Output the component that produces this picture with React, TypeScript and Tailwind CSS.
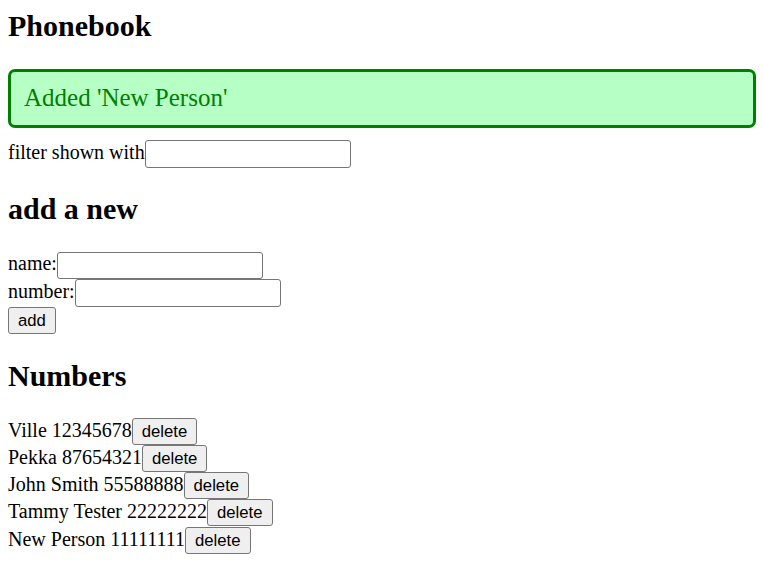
import { useState } from "react";

const persons = [
  { name: "Ville", number: "12345678" },
  { name: "Pekka", number: "87654321" },
  { name: "John Smith", number: "55588888" },
  { name: "Tammy Tester", number: "22222222" },
  { name: "New Person", number: "11111111" },
];

const inputClass =
  "w-[206px] h-[27.5px] border border-[#767676] rounded-[3px] bg-white px-[3px] text-[16.7px] leading-[19px] [font-family:'Liberation_Sans',Arial,sans-serif]";

const buttonClass =
  "h-[27px] px-[9px] border border-[#767676] rounded-[3px] bg-[#efefef] text-black text-[16.7px] leading-[19px] [font-family:'Liberation_Sans',Arial,sans-serif]";

export default function App() {
  const [filter, setFilter] = useState("");
  const [name, setName] = useState("");
  const [number, setNumber] = useState("");

  return (
    <div className="min-h-screen bg-white px-2 text-black text-[20px] leading-[23px] [font-family:'Liberation_Serif','Times_New_Roman',serif]">
      <h2 className="pt-[9px] text-[30px] font-bold leading-[34px]">Phonebook</h2>

      <div className="mt-[26px] mb-[12px] rounded-[7px] border-[3px] border-[#008000] bg-[#b6ffc5] pl-[13px] pt-[11px] pb-[13px] text-[25px] leading-[29px] text-[#008000]">
        Added 'New Person'
      </div>

      <div className="flex items-baseline">
        <span>filter shown with</span>
        <input
          className={inputClass}
          value={filter}
          onChange={(e) => setFilter(e.target.value)}
        />
      </div>

      <h2 className="mt-[24px] text-[30px] font-bold leading-[34px]">add a new</h2>

      <form className="mt-[26px]" onSubmit={(e) => e.preventDefault()}>
        <div className="flex items-baseline">
          <span>name:</span>
          <input
            className={inputClass}
            value={name}
            onChange={(e) => setName(e.target.value)}
          />
        </div>
        <div className="flex items-baseline">
          <span>number:</span>
          <input
            className={inputClass}
            value={number}
            onChange={(e) => setNumber(e.target.value)}
          />
        </div>
        <div className="flex items-baseline">
          <button type="submit" className={buttonClass}>
            add
          </button>
        </div>
      </form>

      <h2 className="mt-[25px] text-[30px] font-bold leading-[34px]">Numbers</h2>

      <div className="mt-[25px]">
        {persons.map((p) => (
          <div key={p.name} className="flex h-[27.3px] items-baseline">
            <span>
              {p.name} {p.number}
            </span>
            <button className={buttonClass}>delete</button>
          </div>
        ))}
      </div>
    </div>
  );
}
